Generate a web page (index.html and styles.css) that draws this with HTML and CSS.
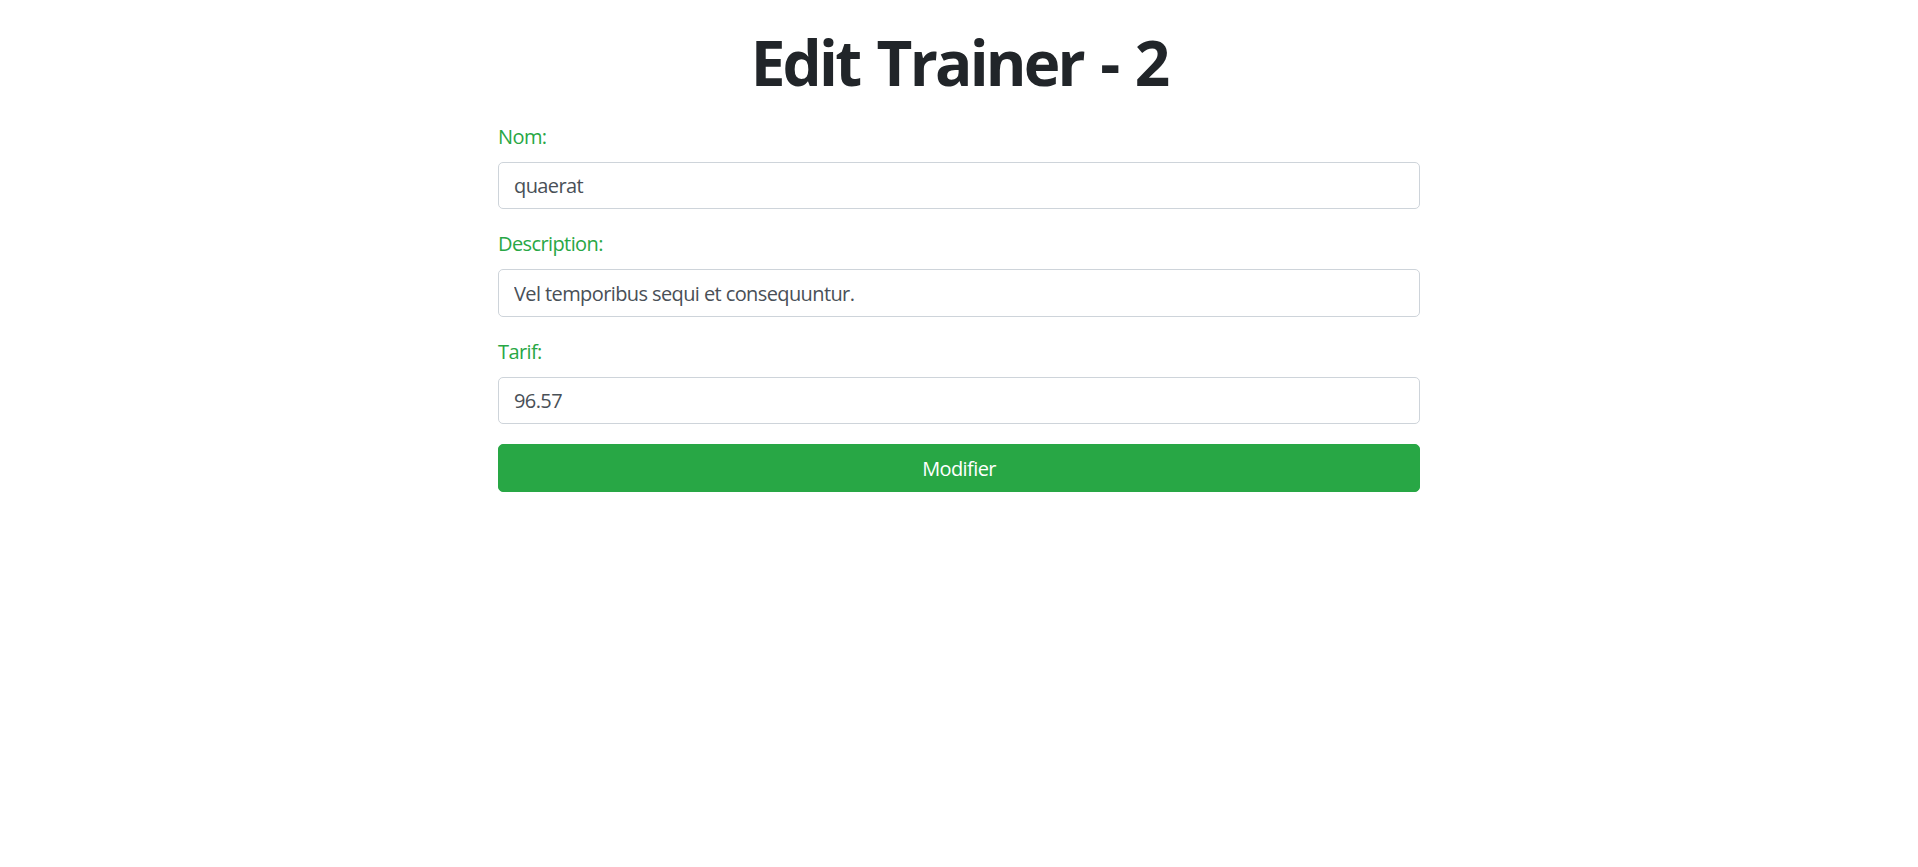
FILE: index.html
```html
<!DOCTYPE html>
<html lang="fr">
<head>
<meta charset="utf-8">
<title>Edit Trainer - 2</title>
<link rel="stylesheet" href="styles.css">
</head>
<body>
<main class="page">
  <h1 class="title">Edit Trainer - 2</h1>
  <form class="form">
    <div class="group">
      <label class="label" for="nom">Nom:</label>
      <input class="control" id="nom" type="text" value="quaerat">
    </div>
    <div class="group">
      <label class="label" for="description">Description:</label>
      <input class="control" id="description" type="text" value="Vel temporibus sequi et consequuntur.">
    </div>
    <div class="group">
      <label class="label" for="tarif">Tarif:</label>
      <input class="control" id="tarif" type="text" value="96.57">
    </div>
    <button class="btn" type="submit">Modifier</button>
  </form>
</main>
</body>
</html>
```

FILE: styles.css
```css
html, body {
  margin: 0;
  padding: 0;
  background: #ffffff;
}

body {
  font-family: "Open Sans", "Noto Sans", "Liberation Sans", sans-serif;
  color: #212529;
  font-size: 20px;
  line-height: 1.5;
}

.page {
  width: 922px;
  margin: 0 auto;
  display: flex;
  flex-direction: column;
}

.title {
  margin: 25px 0 22.5px;
  font-size: 62px;
  font-weight: 700;
  line-height: 1.2;
  text-align: center;
  color: #212529;
  letter-spacing: -2.8px;
  word-spacing: 4px;
}

.form {
  display: flex;
  flex-direction: column;
}

.group {
  display: flex;
  flex-direction: column;
  margin-bottom: 20px;
}

.label {
  color: #28a745;
  font-size: 20px;
  line-height: 30px;
  margin-bottom: 10px;
  letter-spacing: -0.6px;
}

.control {
  box-sizing: border-box;
  height: 47.5px;
  width: 100%;
  padding: 0 15px;
  font-family: inherit;
  font-size: 20px;
  letter-spacing: -0.6px;
  color: #495057;
  background: #ffffff;
  border: 1px solid #ced4da;
  border-radius: 5px;
  outline: none;
}

.btn {
  box-sizing: border-box;
  height: 47.5px;
  width: 100%;
  font-family: inherit;
  font-size: 20px;
  letter-spacing: -0.6px;
  color: #ffffff;
  background: #28a745;
  border: 1px solid #28a745;
  border-radius: 5px;
  cursor: pointer;
}
```
